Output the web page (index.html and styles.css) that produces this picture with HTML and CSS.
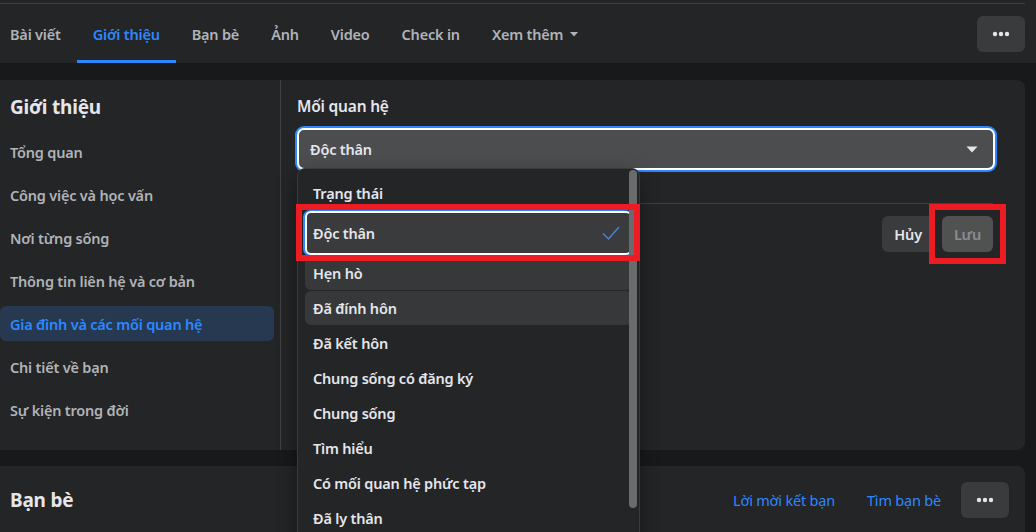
FILE: index.html
```html
<!DOCTYPE html>
<html lang="vi">
<head>
  <meta charset="UTF-8" />
  <meta name="viewport" content="width=device-width, initial-scale=1.0"/>
  <title>Giới thiệu</title>
  <link rel="stylesheet" href="styles.css">
</head>
<body>
  <nav class="topnav">
    <div class="topnav-inner">
      <ul class="tabs">
        <li class="tab">Bài viết</li>
        <li class="tab active">Giới thiệu</li>
        <li class="tab">Bạn bè</li>
        <li class="tab">Ảnh</li>
        <li class="tab">Video</li>
        <li class="tab">Check in</li>
        <li class="tab">Xem thêm
          <svg class="tab-caret" width="10" height="6" viewBox="0 0 10 6"><path d="M1 1h8L5 5.5z" fill="#b0b3b8"/></svg>
        </li>
      </ul>
      <button class="icon-btn">
        <svg width="18" height="6" viewBox="0 0 18 6"><circle cx="3" cy="3" r="2.2" fill="#e4e6eb"/><circle cx="9" cy="3" r="2.2" fill="#e4e6eb"/><circle cx="15" cy="3" r="2.2" fill="#e4e6eb"/></svg>
      </button>
    </div>
  </nav>

  <section class="card about">
    <aside class="about-menu">
      <h2 class="card-title">Giới thiệu</h2>
      <ul class="menu">
        <li>Tổng quan</li>
        <li>Công việc và học vấn</li>
        <li>Nơi từng sống</li>
        <li>Thông tin liên hệ và cơ bản</li>
        <li class="current">Gia đình và các mối quan hệ</li>
        <li>Chi tiết về bạn</li>
        <li>Sự kiện trong đời</li>
      </ul>
    </aside>

    <div class="about-body">
      <div class="field-label">Mối quan hệ</div>
      <div class="select-wrap">
        <div class="select">
          <span>Độc thân</span>
          <svg width="12" height="7" viewBox="0 0 12 7"><path d="M0.5 0.5h11L6 6.5z" fill="#e4e6eb"/></svg>
        </div>

        <div class="dropdown">
          <ul class="options">
            <li class="option">Trạng thái</li>
            <li class="option selected">Độc thân
              <svg class="check" width="18" height="14" viewBox="0 0 18 14"><path d="M1 7.5l5.5 5.5L17 1" fill="none" stroke="#4b82d9" stroke-width="1.4"/></svg>
            </li>
            <li class="option hover">Hẹn hò</li>
            <li class="option hover">Đã đính hôn</li>
            <li class="option">Đã kết hôn</li>
            <li class="option">Chung sống có đăng ký</li>
            <li class="option">Chung sống</li>
            <li class="option">Tìm hiểu</li>
            <li class="option">Có mối quan hệ phức tạp</li>
            <li class="option">Đã ly thân</li>
          </ul>
          <div class="scroll-thumb"></div>
          <div class="mark mark-option"></div>
        </div>
      </div>

      <div class="divider"></div>

      <div class="actions">
        <button class="btn">Hủy</button>
        <span class="save-wrap">
          <button class="btn disabled">Lưu</button>
          <span class="mark mark-save"></span>
        </span>
      </div>
    </div>
  </section>

  <section class="card friends">
    <h2 class="card-title">Bạn bè</h2>
    <div class="friends-actions">
      <a class="link">Lời mời kết bạn</a>
      <a class="link">Tìm bạn bè</a>
      <button class="icon-btn">
        <svg width="18" height="6" viewBox="0 0 18 6"><circle cx="3" cy="3" r="2.2" fill="#e4e6eb"/><circle cx="9" cy="3" r="2.2" fill="#e4e6eb"/><circle cx="15" cy="3" r="2.2" fill="#e4e6eb"/></svg>
      </button>
    </div>
  </section>
</body>
</html>
```

FILE: styles.css
```css
html, body {
  margin: 0;
  height: 100%;
  overflow: hidden;
}

body {
  background-color: #18191a;
  font-family: "Noto Sans", sans-serif;
  font-size: 14.5px;
  letter-spacing: -0.2px;
  color: #e4e6eb;
}

ul {
  list-style: none;
  margin: 0;
  padding: 0;
}

button {
  font-family: inherit;
  letter-spacing: inherit;
  border: 0;
  cursor: pointer;
}

/* thanh tab trên cùng */
.topnav {
  background-color: #242526;
  padding-top: 3px;
}

.topnav-inner {
  display: flex;
  align-items: center;
  justify-content: space-between;
  width: 1025px;
  height: 59px;
  border-top: 1px solid #3e4042;
}

.tabs {
  display: flex;
  height: 100%;
  margin-left: -6px;
}

.tab {
  display: flex;
  align-items: center;
  gap: 6px;
  padding: 0 16px;
  font-weight: 600;
  color: #b0b3b8;
  border-bottom: 3px solid transparent;
  padding-top: 3px;
}

.tab.active {
  color: #2d88ff;
  border-bottom-color: #2d88ff;
}

.icon-btn {
  display: flex;
  align-items: center;
  justify-content: center;
  width: 48px;
  height: 36px;
  border-radius: 6px;
  background-color: #3a3b3c;
}

/* các thẻ */
.card {
  width: 1025px;
  background-color: #242526;
  border-radius: 0 8px 8px 0;
}

.card-title {
  margin: 0;
  font-size: 19px;
  font-weight: 700;
  line-height: 24px;
  color: #e4e6eb;
}

.about {
  display: flex;
  height: 370px;
  margin-top: 17px;
}

.about-menu {
  width: 274px;
  padding: 15px 6px 0 0;
  border-right: 1px solid #3e4042;
}

.about-menu .card-title {
  padding-left: 10px;
  margin-bottom: 15px;
}

.menu li {
  display: flex;
  align-items: center;
  height: 35px;
  padding-left: 10px;
  margin-bottom: 8px;
  border-radius: 6px;
  font-weight: 600;
  color: #b0b3b8;
}

.menu li.current {
  background-color: #263951;
  color: #2d88ff;
}

.about-body {
  flex: 1;
  padding: 16px 32px 0 16px;
}

.field-label {
  font-size: 15.5px;
  font-weight: 600;
  line-height: 20px;
  margin-bottom: 12px;
}

.select-wrap {
  position: relative;
}

.select {
  display: flex;
  align-items: center;
  justify-content: space-between;
  height: 38px;
  padding: 0 15px 0 11px;
  margin-right: -2px;
  background-color: #4c4d4f;
  border: 2px solid #ffffff;
  border-radius: 7px;
  box-shadow: 0 0 0 2px #2d88ff;
  font-weight: 600;
}

.dropdown {
  position: absolute;
  top: 40px;
  left: 0;
  width: 341px;
  height: 420px;
  background-color: #242526;
  border: 1px solid #3a3b3c;
  border-radius: 8px;
  box-shadow: 0 8px 20px rgba(0, 0, 0, 0.4);
  z-index: 5;
}

.options {
  display: flex;
  flex-direction: column;
  gap: 1px;
  padding-top: 7px;
}

.option {
  display: flex;
  align-items: center;
  justify-content: space-between;
  height: 34px;
  margin: 0 7px 0 7px;
  padding: 0 8px;
  border-radius: 6px;
  font-weight: 600;
  color: #e4e6eb;
}

.option.hover {
  background-color: #37383a;
}

.option.selected {
  height: 40px;
  padding: 0 10px 0 6px;
  background-color: #3a3b3c;
  border: 2px solid #ffffff;
  box-shadow: -1px 0 0 1px #2d88ff;
}

.scroll-thumb {
  position: absolute;
  top: 1px;
  right: 2px;
  width: 8px;
  height: 338px;
  border-radius: 4px;
  background-color: #6a6b6d;
}

/* khung đỏ đánh dấu */
.mark {
  position: absolute;
  border: 6px solid #ed1c24;
  pointer-events: none;
}

.mark-option {
  top: 35px;
  left: -2px;
  width: 332px;
  height: 45px;
}

.mark-save {
  top: -12px;
  right: -13px;
  bottom: -12px;
  left: -13px;
}

.divider {
  height: 1px;
  margin-top: 33px;
  background-color: #3e4042;
}

.actions {
  display: flex;
  justify-content: flex-end;
  align-items: center;
  gap: 8px;
  margin-top: 12px;
}

.save-wrap {
  position: relative;
  display: inline-flex;
}

.btn {
  height: 36px;
  padding: 0 12px;
  border-radius: 6px;
  background-color: #3a3b3c;
  color: #e4e6eb;
  font-size: 14.5px;
  font-weight: 600;
}

.btn.disabled {
  background-color: #505151;
  color: #8a8d91;
  cursor: default;
}

/* thẻ bạn bè */
.friends {
  display: flex;
  justify-content: space-between;
  align-items: flex-start;
  margin-top: 16px;
  padding: 16px 16px 16px 10px;
  box-sizing: border-box;
  height: 120px;
}

.friends .card-title {
  margin-top: 6px;
}

.friends-actions {
  display: flex;
  align-items: center;
  gap: 8px;
}

.link {
  padding: 0 12px;
  color: #2d88ff;
}
```
